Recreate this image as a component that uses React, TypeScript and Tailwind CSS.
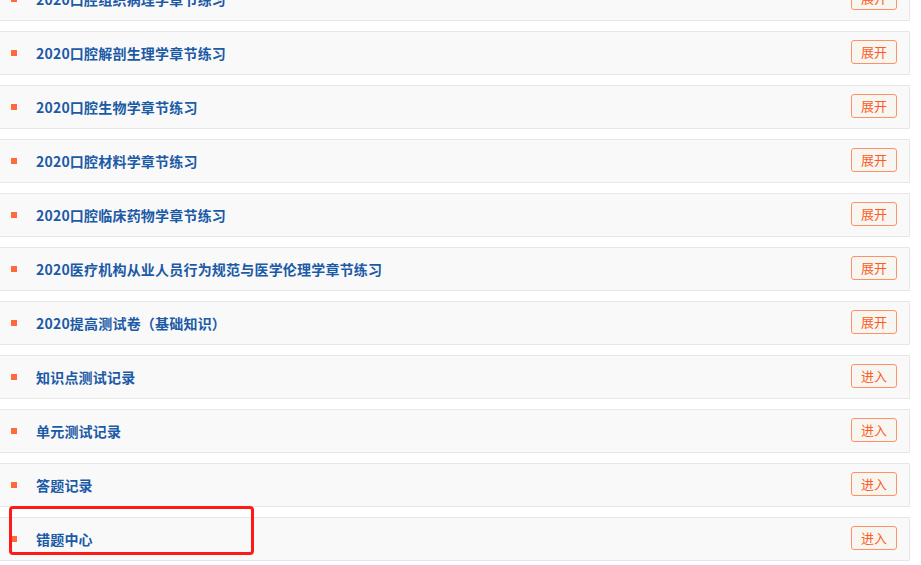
import React from "react";

type Item = { title: string; action: "展开" | "进入" };

const items: Item[] = [
  { title: "2020口腔组织病理学章节练习", action: "展开" },
  { title: "2020口腔解剖生理学章节练习", action: "展开" },
  { title: "2020口腔生物学章节练习", action: "展开" },
  { title: "2020口腔材料学章节练习", action: "展开" },
  { title: "2020口腔临床药物学章节练习", action: "展开" },
  { title: "2020医疗机构从业人员行为规范与医学伦理学章节练习", action: "展开" },
  { title: "2020提高测试卷（基础知识）", action: "展开" },
  { title: "知识点测试记录", action: "进入" },
  { title: "单元测试记录", action: "进入" },
  { title: "答题记录", action: "进入" },
  { title: "错题中心", action: "进入" },
];

function Row({ item, highlight }: { item: Item; highlight?: boolean }) {
  return (
    <li className="relative flex h-[44px] w-[910px] items-center border-y border-r border-[#e7e7e7] bg-[#f9f9f9]">
      <span className="ml-[11px] h-[6px] w-[6px] shrink-0 bg-[#ff6a3a]" />
      <span className="ml-[19px] text-[14px] font-bold tracking-[0.2px] text-[#1b5aa6]">{item.title}</span>
      <button className="mb-[2px] ml-auto mr-[12px] flex h-[24px] w-[46px] items-center justify-center rounded-[3px] border border-[#ff9068] bg-[#f8f6f1] text-[13px] text-[#ff5a1f]">
        {item.action}
      </button>
      {highlight && (
        <div className="pointer-events-none absolute left-[9px] top-[-12px] h-[49px] w-[245px] rounded-[4px] border-[3px] border-[#ff1a1a]" />
      )}
    </li>
  );
}

export default function App() {
  return (
    <div
      className="h-[565px] w-[921px] overflow-hidden bg-white"
      style={{ fontFamily: '"Noto Sans CJK SC", "Noto Sans", sans-serif' }}
    >
      <ul className="mt-[-23px] flex flex-col gap-[10px]">
        {items.map((item, i) => (
          <Row key={item.title} item={item} highlight={i === items.length - 1} />
        ))}
      </ul>
    </div>
  );
}
